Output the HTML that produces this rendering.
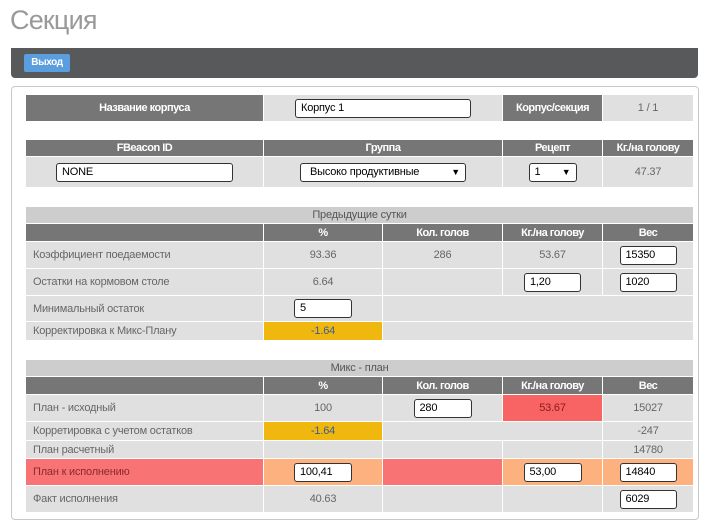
<!DOCTYPE html>
<html><head><meta charset="utf-8"><style>
*{box-sizing:border-box}
body{margin:0;width:711px;height:527px;background:#fff;font-family:"Liberation Sans",sans-serif;font-size:11px;color:#555;position:relative;overflow:hidden;letter-spacing:-0.2px}
h1{position:absolute;left:10px;top:5px;margin:0;font-weight:normal;font-size:27px;color:#999;letter-spacing:-0.8px}
.bar{position:absolute;left:11px;top:48px;width:687px;height:30px;background:#58595b;border-radius:0 0 4px 4px}
.btn{position:absolute;left:13px;top:6px;width:46px;height:18px;background:#5b9ee0;color:#fff;font-size:10px;font-weight:bold;line-height:18px;text-align:center;border-radius:2px;letter-spacing:-0.4px}
.panel{position:absolute;left:11px;top:86px;width:688px;height:434px;border:1px solid #c8c8c8;border-radius:4px}
table{position:absolute;left:25px;width:668px;border-collapse:collapse;table-layout:fixed}
td{border:1px solid #fff;padding:0;text-align:center;background:#e0e0e0;color:#666;white-space:nowrap}
td.h{background:#767676;color:#fff;font-weight:bold;letter-spacing:-0.5px}
td.s{background:#cdcdcd;color:#555}
td.l{text-align:left;padding-left:7px}
td.y{background:#f0b70e;color:#3b5a95}
td.r{background:#f86464;color:#8a1a1a}
td.p{background:#f87474;color:#8a2a2a}
td.o{background:#fdb17f}
.in{display:inline-block;background:#fff;border:1px solid #333;border-radius:3px;height:19px;line-height:17px;text-align:left;padding-left:5px;color:#000;font-size:11px;vertical-align:middle}
.sel{position:relative}
.sel:after{content:"▼";position:absolute;right:5px;top:0;font-size:9px}
</style></head><body>
<h1>Секция</h1>
<div class="bar"><div class="btn">Выход</div></div>
<div class="panel"></div>
<table style="top:94px"><colgroup><col style="width:238px"><col style="width:239px"><col style="width:100px"><col style="width:91px"></colgroup>
<tr style="height:27px"><td class="h">Название корпуса</td><td><span class="in" style="width:176px">Корпус 1</span></td><td class="h">Корпус/секция</td><td>1 / 1</td></tr></table>
<table style="top:139px"><colgroup><col style="width:238px"><col style="width:239px"><col style="width:100px"><col style="width:91px"></colgroup>
<tr style="height:17px"><td class="h">FBeacon ID</td><td class="h">Группа</td><td class="h">Рецепт</td><td class="h">Кг./на голову</td></tr>
<tr style="height:31px"><td><span class="in" style="width:177px">NONE</span></td><td><span class="in sel" style="width:166px;padding-left:9px">Высоко продуктивные</span></td><td><span class="in sel" style="width:48px">1</span></td><td>47.37</td></tr></table>
<table style="top:206px"><colgroup><col style="width:238px"><col style="width:119px"><col style="width:120px"><col style="width:100px"><col style="width:91px"></colgroup>
<tr style="height:17px"><td class="s" colspan="5">Предыдущие сутки</td></tr>
<tr style="height:18px"><td class="h"></td><td class="h">%</td><td class="h">Кол. голов</td><td class="h">Кг./на голову</td><td class="h">Вес</td></tr>
<tr style="height:27px"><td class="l">Коэффициент поедаемости</td><td>93.36</td><td>286</td><td>53.67</td><td><span class="in" style="width:57px">15350</span></td></tr>
<tr style="height:27px"><td class="l">Остатки на кормовом столе</td><td>6.64</td><td></td><td><span class="in" style="width:57px">1,20</span></td><td><span class="in" style="width:57px">1020</span></td></tr>
<tr style="height:26px"><td class="l">Минимальный остаток</td><td><span class="in" style="width:58px">5</span></td><td colspan="3"></td></tr>
<tr style="height:19px"><td class="l">Корректировка к Микс-Плану</td><td class="y">-1.64</td><td colspan="3"></td></tr></table>
<table style="top:359px"><colgroup><col style="width:238px"><col style="width:119px"><col style="width:120px"><col style="width:100px"><col style="width:91px"></colgroup>
<tr style="height:17px"><td class="s" colspan="5">Микс - план</td></tr>
<tr style="height:18px"><td class="h"></td><td class="h">%</td><td class="h">Кол. голов</td><td class="h">Кг./на голову</td><td class="h">Вес</td></tr>
<tr style="height:27px"><td class="l">План - исходный</td><td>100</td><td><span class="in" style="width:58px">280</span></td><td class="r">53.67</td><td>15027</td></tr>
<tr style="height:19px"><td class="l">Корретировка с учетом остатков</td><td class="y">-1.64</td><td colspan="2"></td><td>-247</td></tr>
<tr style="height:18px"><td class="l">План расчетный</td><td></td><td></td><td></td><td>14780</td></tr>
<tr style="height:27px"><td class="l p">План к исполнению</td><td class="o"><span class="in" style="width:58px">100,41</span></td><td class="p"></td><td class="o"><span class="in" style="width:58px">53,00</span></td><td class="o"><span class="in" style="width:57px">14840</span></td></tr>
<tr style="height:27px"><td class="l">Факт исполнения</td><td>40.63</td><td></td><td></td><td><span class="in" style="width:57px">6029</span></td></tr></table>
</body></html>
